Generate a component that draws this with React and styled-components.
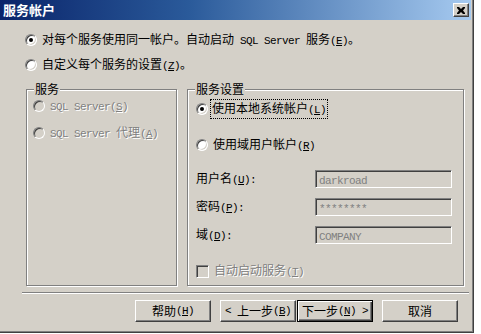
import React from 'react';
import styled, { createGlobalStyle, css } from 'styled-components';

const FACE = '#d4d0c8';
const SHADOW = '#808080';
const DARK = '#404040';

const GlobalStyle = createGlobalStyle`
  html, body { margin: 0; padding: 0; background: #ffffff; }
  body { font-family: "Noto Sans CJK SC", "Noto Sans", sans-serif; font-size: 12px; color: #000; }
  * { box-sizing: border-box; }
`;

const Window = styled.div`
  width: 474px;
  height: 333px;
  background: ${FACE};
  border-right: 1px solid ${DARK};
  border-bottom: 1px solid ${DARK};
  box-shadow: inset -1px -1px 0 ${SHADOW};
  display: flex;
  flex-direction: column;
`;

const TitleBar = styled.div`
  height: 20px;
  margin-right: 2px;
  background: linear-gradient(to right, #0a246a 0%, #2a5a9a 40%, #a6caf0 100%);
  display: flex;
  align-items: center;
  justify-content: space-between;
  padding: 0 2px 0 3px;
`;

const Title = styled.span`
  color: #fff;
  font-weight: bold;
  font-size: 13px;
  letter-spacing: 0px;
  line-height: 16px;
`;

const CloseButton = styled.span`
  width: 16px;
  height: 14px;
  background: ${FACE};
  border: 1px solid;
  border-color: #fff ${DARK} ${DARK} #fff;
  box-shadow: inset -1px -1px 0 ${SHADOW};
  display: flex;
  align-items: center;
  justify-content: center;
`;

const Content = styled.div`
  flex: 1;
  display: flex;
  flex-direction: column;
  padding-top: 12px;
`;

const OptionRow = styled.div`
  display: flex;
  align-items: center;
  height: 16px;
  gap: 5px;
  padding-left: ${p => p.$indent || 0}px;
  margin-top: ${p => p.$top || 0}px;
  line-height: 16px;
  white-space: nowrap;
`;

const RadioDot = styled.span`
  flex: none;
  width: 12px;
  height: 12px;
  border-radius: 50%;
  border: 1px solid;
  border-color: ${SHADOW} #fff #fff ${SHADOW};
  background: ${p => (p.$disabled ? FACE : '#fff')};
  box-shadow: inset 1px 1px 0 ${DARK}, inset -1px -1px 0 ${FACE};
  display: flex;
  align-items: center;
  justify-content: center;
  &::after {
    content: '';
    width: 4px;
    height: 4px;
    border-radius: 50%;
    background: #000;
    display: ${p => (p.$checked ? 'block' : 'none')};
  }
`;

const CheckBox = styled.span`
  flex: none;
  width: 13px;
  height: 13px;
  border: 1px solid;
  border-color: ${SHADOW} #fff #fff ${SHADOW};
  background: ${p => (p.$disabled ? FACE : '#fff')};
  box-shadow: inset 1px 1px 0 ${DARK}, inset -1px -1px 0 ${FACE};
`;

const Label = styled.span`
  ${p => p.$disabled && css`
    color: ${SHADOW};
    text-shadow: 1px 1px 0 #fff;
  `}
  ${p => p.$focus && css`
    outline: 1px dotted #000;
    outline-offset: 0;
    padding: 0 1px;
    margin-left: -2px;
  `}
`;

const Lat = styled.span`
  font-family: "Liberation Mono", "DejaVu Sans Mono", monospace;
  font-size: 11px;
  letter-spacing: -0.6px;
  white-space: pre;
  u { text-underline-offset: 1px; }
`;

const GroupsRow = styled.div`
  display: flex;
  gap: 10px;
  margin-top: 16px;
  padding-left: 26px;
`;

const GroupBox = styled.div`
  position: relative;
  width: ${p => p.$width}px;
  height: 197px;
  border: 1px solid ${SHADOW};
  box-shadow: inset 1px 1px 0 #fff, 1px 1px 0 #fff;
  display: flex;
  flex-direction: column;
  padding: ${p => p.$pad};
`;

const Legend = styled.span`
  position: absolute;
  top: -9px;
  left: 7px;
  background: ${FACE};
  padding: 0 1px;
  line-height: 16px;
`;

const FieldRow = styled.div`
  display: flex;
  align-items: center;
  height: 18px;
  margin-top: ${p => p.$top || 0}px;
`;

const FieldLabel = styled.span`
  width: 119px;
  line-height: 16px;
`;

const Input = styled.div`
  width: 137px;
  height: 18px;
  border: 1px solid;
  border-color: ${SHADOW} #fff #fff ${SHADOW};
  box-shadow: inset 1px 1px 0 ${DARK}, inset -1px -1px 0 ${FACE};
  background: ${FACE};
  color: ${SHADOW};
  padding-left: 3px;
  line-height: 16px;
  white-space: nowrap;
`;

const Separator = styled.div`
  margin: 6px 4px 0 22px;
  border-top: 1px solid ${SHADOW};
  border-bottom: 1px solid #fff;
`;

const ButtonRow = styled.div`
  display: flex;
  margin-top: 6px;
  padding-left: 135px;
`;

const Button = styled.div`
  width: 76px;
  height: 22px;
  margin-left: ${p => p.$gap || 0}px;
  background: ${FACE};
  display: flex;
  align-items: center;
  justify-content: center;
  line-height: 16px;
  white-space: nowrap;
  border: 1px solid;
  border-color: #fff ${DARK} ${DARK} #fff;
  box-shadow: inset -1px -1px 0 ${SHADOW};
  ${p => p.$default && css`
    border: 1px solid #000;
    box-shadow: inset 1px 1px 0 #fff, inset -1px -1px 0 ${DARK}, inset -2px -2px 0 ${SHADOW};
  `}
`;

function txt(s) {
  const out = [];
  let i = 0;
  let k = 0;
  while (i < s.length) {
    const isLat = s.charCodeAt(i) < 128;
    let j = i;
    const nodes = [];
    let buf = '';
    while (j < s.length && (s.charCodeAt(j) < 128) === isLat) {
      if (s[j] === '&' && j + 1 < s.length) {
        if (buf) nodes.push(buf);
        buf = '';
        nodes.push(<u key={j}>{s[j + 1]}</u>);
        j += 2;
        continue;
      }
      buf += s[j];
      j++;
    }
    if (buf) nodes.push(buf);
    out.push(isLat ? <Lat key={k++}>{nodes}</Lat> : <React.Fragment key={k++}>{nodes}</React.Fragment>);
    i = j;
  }
  return out;
}

const CloseGlyph = () => (
  <svg width="8" height="7" viewBox="0 0 8 7">
    <path d="M0 0h2l2 2 2-2h2v1L6 3.5 8 6v1H6L4 5 2 7H0V6l2-2.5L0 1z" fill="#000" />
  </svg>
);

export default function App() {
  return (
    <>
      <GlobalStyle />
      <Window>
        <TitleBar>
          <Title>服务帐户</Title>
          <CloseButton><CloseGlyph /></CloseButton>
        </TitleBar>
        <Content>
          <OptionRow $indent={25}>
            <RadioDot $checked />
            <Label>{txt('对每个服务使用同一帐户。自动启动 SQL Server 服务(&E)。')}</Label>
          </OptionRow>
          <OptionRow $indent={25} $top={9}>
            <RadioDot />
            <Label>{txt('自定义每个服务的设置(&Z)。')}</Label>
          </OptionRow>
          <GroupsRow>
            <GroupBox $width={151} $pad="8px 0 0 6px">
              <Legend>服务</Legend>
              <OptionRow>
                <RadioDot $disabled />
                <Label $disabled>{txt('SQL Server(&S)')}</Label>
              </OptionRow>
              <OptionRow $top={11}>
                <RadioDot $disabled />
                <Label $disabled>{txt('SQL Server 代理(&A)')}</Label>
              </OptionRow>
            </GroupBox>
            <GroupBox $width={277} $pad="11px 0 0 8px">
              <Legend>服务设置</Legend>
              <OptionRow>
                <RadioDot $checked />
                <Label $focus>{txt('使用本地系统帐户(&L)')}</Label>
              </OptionRow>
              <OptionRow $top={20}>
                <RadioDot />
                <Label>{txt('使用域用户帐户(&R)')}</Label>
              </OptionRow>
              <FieldRow $top={17}>
                <FieldLabel>{txt('用户名(&U):')}</FieldLabel>
                <Input>{txt('darkroad')}</Input>
              </FieldRow>
              <FieldRow $top={10}>
                <FieldLabel>{txt('密码(&P):')}</FieldLabel>
                <Input>{txt('********')}</Input>
              </FieldRow>
              <FieldRow $top={10}>
                <FieldLabel>{txt('域(&D):')}</FieldLabel>
                <Input>{txt('COMPANY')}</Input>
              </FieldRow>
              <OptionRow $top={19}>
                <CheckBox $disabled />
                <Label $disabled>{txt('自动启动服务(&T)')}</Label>
              </OptionRow>
            </GroupBox>
          </GroupsRow>
          <Separator />
          <ButtonRow>
            <Button>{txt('帮助(&H)')}</Button>
            <Button $gap={9}>{txt('< 上一步(&B)')}</Button>
            <Button $gap={1} $default>{txt('下一步(&N) >')}</Button>
            <Button $gap={9}>{txt('取消')}</Button>
          </ButtonRow>
        </Content>
      </Window>
    </>
  );
}
